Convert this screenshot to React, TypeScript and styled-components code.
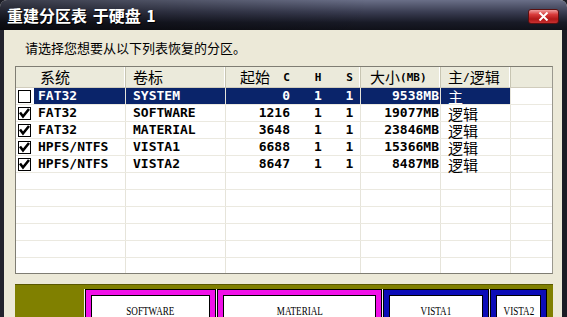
import styled, { createGlobalStyle } from 'styled-components';

const GlobalStyle = createGlobalStyle`
  html, body {
    margin: 0;
    padding: 0;
    background: #1b1c25;
  }
`;

const MONO = '"DejaVu Sans Mono", "Liberation Mono", monospace';
const CJK = '"Noto Sans CJK SC", "Noto Sans", sans-serif';
const COLS = '110px 100px 71px 42px 22px 80px 70px 41px';

const Window = styled.div`
  width: 567px;
  height: 317px;
  display: flex;
  flex-direction: column;
  overflow: hidden;
  border-radius: 7px 7px 0 0;
  background: #ece9d8;
`;

const TitleBar = styled.div`
  height: 30px;
  flex-shrink: 0;
  display: flex;
  align-items: center;
  justify-content: space-between;
  padding: 0 8px 0 7px;
  box-sizing: border-box;
  background: linear-gradient(to right, rgba(0, 0, 0, 0.45), rgba(0, 0, 0, 0) 65%),
    linear-gradient(to bottom, #6a6f88 0%, #3a3d52 40%, #181a26 75%, #101119 100%);
`;

const Title = styled.span`
  font-family: ${CJK};
  font-size: 16px;
  font-weight: 700;
  color: #fff;
  word-spacing: 2px;
  text-shadow: 1px 1px 0 #000;
`;

const CloseButton = styled.div`
  width: 31px;
  height: 15px;
  margin-top: 2px;
  border-radius: 3px;
  border: 1px solid #5a1010;
  box-sizing: border-box;
  display: flex;
  align-items: center;
  justify-content: center;
  background: linear-gradient(to bottom, #f0a0a0 0%, #d83a3a 35%, #b01818 70%, #c83030 100%);
`;

const Body = styled.div`
  flex: 1;
  display: flex;
  flex-direction: column;
  border-left: 4px solid #22232d;
  border-right: 5px solid #1b1c25;
  padding: 9px 9px 0 11px;
  min-height: 0;
`;

const Prompt = styled.div`
  font-family: ${CJK};
  font-size: 13px;
  line-height: 18px;
  color: #000;
  padding-left: 10px;
  margin-bottom: 9px;
`;

const ListBox = styled.div`
  height: 208px;
  flex-shrink: 0;
  border: 1px solid #7f7d73;
  border-right-color: #9a988e;
  background: #fff;
  overflow: hidden;
  box-sizing: border-box;
`;

const HeaderRow = styled.div`
  display: grid;
  grid-template-columns: ${COLS};
  height: 21px;
  box-sizing: border-box;
  background: #ebeadb;
  border-bottom: 1px solid #d0ccbc;
`;

const HeaderCell = styled.div<{ $pad?: number; $align?: string; $sep?: boolean }>`
  display: flex;
  align-items: center;
  justify-content: ${({ $align }) => $align || 'flex-start'};
  padding-left: ${({ $pad }) => $pad || 0}px;
  padding-right: ${({ $align }) => ($align === 'flex-end' ? 7 : 0)}px;
  box-sizing: border-box;
  border-right: ${({ $sep }) => ($sep ? '1px solid #c7c5b2' : 'none')};
  box-shadow: ${({ $sep }) => ($sep ? 'inset -1px 0 0 #fff' : 'none')};
  white-space: nowrap;
`;

const Cjk = styled.span`
  font-family: ${CJK};
  font-size: 15px;
  line-height: 16px;
  color: #000;
`;

const Small = styled.span`
  font-family: ${MONO};
  font-size: 11px;
  font-weight: 700;
  color: #000;
`;

const Row = styled.div`
  display: grid;
  grid-template-columns: ${COLS};
  height: 17px;
  box-sizing: border-box;
  border-bottom: 1px solid #ebe9e0;
`;

const FirstCell = styled.div`
  display: flex;
  align-items: stretch;
  border-right: 1px solid #e6e4da;
  padding: 0 0 0 2px;
`;

const CheckWrap = styled.div`
  width: 16px;
  display: flex;
  align-items: center;
`;

const Box = styled.div`
  width: 13px;
  height: 13px;
  border: 1px solid #000;
  box-sizing: border-box;
  background: #fff;
  display: flex;
  align-items: center;
  justify-content: center;
`;

const Cell = styled.div<{ $sel?: boolean; $align?: string; $pad?: number; $sep?: boolean; $cjk?: boolean }>`
  display: flex;
  flex: 1;
  align-items: center;
  justify-content: ${({ $align }) => $align || 'flex-start'};
  padding-left: ${({ $pad }) => $pad || 0}px;
  padding-right: ${({ $align, $pad }) => ($align === 'flex-end' ? $pad || 0 : 0)}px;
  background: ${({ $sel }) => ($sel ? '#0a246a' : 'transparent')};
  color: ${({ $sel }) => ($sel ? '#fff' : '#000')};
  font-family: ${({ $cjk }) => ($cjk ? CJK : MONO)};
  font-size: ${({ $cjk }) => ($cjk ? 15 : 13)}px;
  font-weight: ${({ $cjk }) => ($cjk ? 400 : 700)};
  line-height: ${({ $cjk }) => ($cjk ? 15 : 16)}px;
  white-space: nowrap;
  overflow: visible;
  box-sizing: border-box;
  border-right: ${({ $sep }) => ($sep ? '1px solid #e6e4da' : 'none')};
`;

const DiskBar = styled.div`
  margin-top: 10px;
  flex: 1;
  display: flex;
  align-items: flex-start;
  background: #808000;
  border-top: 1px solid #5a5800;
  padding: 4px 0 0 69px;
  box-sizing: border-box;
`;

const Part = styled.div<{ $w: number }>`
  width: ${({ $w }) => $w}px;
  height: 40px;
  flex-shrink: 0;
  border-left: 1px solid #f4f4f4;
  box-sizing: border-box;
`;

const PartFrame = styled.div<{ $color: string }>`
  height: 100%;
  border: 1px solid #000;
  border-bottom: none;
  background: ${({ $color }) => $color};
  padding: 5px 5px 0;
  box-sizing: border-box;
`;

const PartInner = styled.div`
  height: 100%;
  border: 1px solid #000;
  border-bottom: none;
  background: #fff;
  box-sizing: border-box;
  display: flex;
  justify-content: center;
  padding-top: 8px;
`;

const PartLabel = styled.span`
  display: inline-block;
  font-family: "Liberation Serif", serif;
  font-size: 13px;
  line-height: 13px;
  color: #000;
  transform: scaleX(0.7);
`;

type Partition = {
  checked: boolean;
  fs: string;
  label: string;
  c: string;
  size: string;
  kind: string;
};

const partitions: Partition[] = [
  { checked: false, fs: 'FAT32', label: 'SYSTEM', c: '0', size: '9538MB', kind: '主' },
  { checked: true, fs: 'FAT32', label: 'SOFTWARE', c: '1216', size: '19077MB', kind: '逻辑' },
  { checked: true, fs: 'FAT32', label: 'MATERIAL', c: '3648', size: '23846MB', kind: '逻辑' },
  { checked: true, fs: 'HPFS/NTFS', label: 'VISTA1', c: '6688', size: '15366MB', kind: '逻辑' },
  { checked: true, fs: 'HPFS/NTFS', label: 'VISTA2', c: '8647', size: '8487MB', kind: '逻辑' },
];

const blocks = [
  { name: 'SOFTWARE', w: 132, color: '#f010e8' },
  { name: 'MATERIAL', w: 166, color: '#f010e8' },
  { name: 'VISTA1', w: 107, color: '#0c0cb8' },
  { name: 'VISTA2', w: 58, color: '#0c0cb8' },
];

function CheckBox({ checked }: { checked: boolean }) {
  return (
    <Box>
      {checked && (
        <svg width="11" height="11" viewBox="0 0 11 11">
          <path d="M1 4.5 L4 8.5 L10 1" fill="none" stroke="#000" strokeWidth="2.6" strokeLinejoin="miter" />
        </svg>
      )}
    </Box>
  );
}

function App() {
  const empty = Array.from({ length: 6 });

  return (
    <>
      <GlobalStyle />
      <Window>
        <TitleBar>
          <Title>重建分区表 于硬盘 1</Title>
          <CloseButton>
            <svg width="11" height="9" viewBox="0 0 11 9">
              <path d="M1.5 0.5 L9.5 8.5 M9.5 0.5 L1.5 8.5" stroke="#fff" strokeWidth="2" />
            </svg>
          </CloseButton>
        </TitleBar>
        <Body>
          <Prompt>请选择您想要从以下列表恢复的分区。</Prompt>
          <ListBox>
            <HeaderRow>
              <HeaderCell $pad={24} $sep>
                <Cjk>系统</Cjk>
              </HeaderCell>
              <HeaderCell $pad={7} $sep>
                <Cjk>卷标</Cjk>
              </HeaderCell>
              <HeaderCell $align="flex-end">
                <Cjk>起始</Cjk>
                <Small>&nbsp;&nbsp;C</Small>
              </HeaderCell>
              <HeaderCell $align="center">
                <Small>H</Small>
              </HeaderCell>
              <HeaderCell $align="center" $sep>
                <Small>S</Small>
              </HeaderCell>
              <HeaderCell $pad={9} $sep>
                <Cjk>大小</Cjk>
                <Small>(MB)</Small>
              </HeaderCell>
              <HeaderCell $pad={7} $sep>
                <Cjk>主</Cjk>
                <Small>/</Small>
                <Cjk>逻辑</Cjk>
              </HeaderCell>
              <HeaderCell />
            </HeaderRow>
            {partitions.map((p) => {
              const sel = !p.checked;
              return (
                <Row key={p.label}>
                  <FirstCell>
                    <CheckWrap>
                      <CheckBox checked={p.checked} />
                    </CheckWrap>
                    <Cell $sel={sel} $pad={4}>
                      {p.fs}
                    </Cell>
                  </FirstCell>
                  <Cell $sel={sel} $pad={7} $sep>
                    {p.label}
                  </Cell>
                  <Cell $sel={sel} $align="flex-end" $pad={7}>
                    {p.c}
                  </Cell>
                  <Cell $sel={sel} $align="center">
                    1
                  </Cell>
                  <Cell $sel={sel} $align="center" $sep>
                    1
                  </Cell>
                  <Cell $sel={sel} $align="flex-end" $pad={1} $sep>
                    {p.size}
                  </Cell>
                  <Cell $sel={sel} $pad={7} $sep $cjk>
                    {p.kind}
                  </Cell>
                  <Cell />
                </Row>
              );
            })}
            {empty.map((_, i) => (
              <Row key={i}>
                <Cell $sep />
                <Cell $sep />
                <Cell />
                <Cell />
                <Cell $sep />
                <Cell $sep />
                <Cell $sep />
                <Cell />
              </Row>
            ))}
          </ListBox>
          <DiskBar>
            {blocks.map((b) => (
              <Part key={b.name} $w={b.w}>
                <PartFrame $color={b.color}>
                  <PartInner>
                    <PartLabel>{b.name}</PartLabel>
                  </PartInner>
                </PartFrame>
              </Part>
            ))}
          </DiskBar>
        </Body>
      </Window>
    </>
  );
}

export default App;
